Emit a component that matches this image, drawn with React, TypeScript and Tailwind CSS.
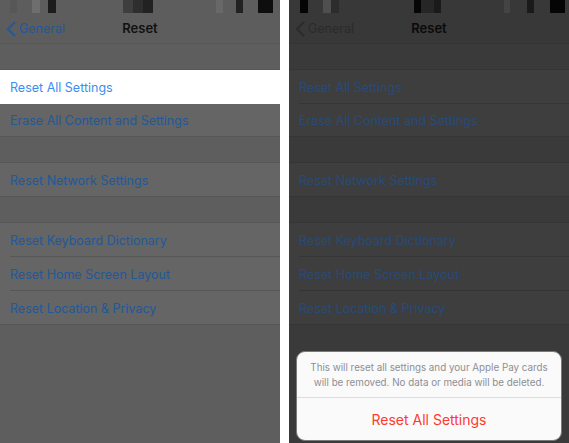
import React from "react";

type Theme = {
  head: string;
  gap: string;
  row: string;
  line: string;
  blue: string;
  title: string;
};

const leftTheme: Theme = {
  head: "bg-[#5d5d5d]",
  gap: "bg-[#5e5e5e]",
  row: "bg-[#656565]",
  line: "border-[#575757]",
  blue: "text-[#21599a]",
  title: "text-[#111111]",
};

const rightTheme: Theme = {
  head: "bg-[#383838]",
  gap: "bg-[#3a3a3a]",
  row: "bg-[#3e3e3e]",
  line: "border-[#353535]",
  blue: "text-[#264b7a]",
  title: "text-[#0a0a0a]",
};

function Chevron({ color }: { color: string }) {
  return (
    <svg width="10" height="16" viewBox="0 0 10 16" className="mr-[3px]">
      <path d="M8.5 1.5 L2 8 L8.5 14.5" fill="none" stroke={color} strokeWidth="2" strokeLinecap="round" strokeLinejoin="round" />
    </svg>
  );
}

function Row({
  label,
  t,
  h,
  full,
  highlight,
}: {
  label: string;
  t: Theme;
  h: string;
  full?: boolean;
  highlight?: boolean;
}) {
  return (
    <div className={`${h} ${full ? `border-b ${t.line}` : ""} ${highlight ? "bg-white" : t.row} pl-[10px]`}>
      <div
        className={`h-full flex items-center pt-[3px] ${full ? "" : `border-b ${highlight ? "border-[#ffffff]" : t.line}`} text-[12.5px] ${highlight ? "text-[#3a8ef0]" : t.blue}`}
      >
        {label}
      </div>
    </div>
  );
}

function Gap({ t }: { t: Theme }) {
  return <div className={`h-[26px] border-b ${t.line}`} />;
}

function Panel({ t, side }: { t: Theme; side: "left" | "right" }) {
  const isLeft = side === "left";
  return (
    <div className={`relative h-[443px] w-[280px] ${t.gap} flex flex-col overflow-hidden`}>
      {isLeft ? (
        <div className={`h-[13px] ${t.head} flex items-start`}>
          <div className="ml-[10px] w-[7px] h-[13px] bg-[#575757]" />
          <div className="ml-[15px] w-[8px] h-[13px] bg-[#6e6e6e]" />
          <div className="ml-[8px] w-[8px] h-[13px] bg-[#1c1c1c]" />
          <div className="ml-[67px] w-[10px] h-[13px] bg-[#3e3e3e]" />
          <div className="w-[10px] h-[13px] bg-[#2e2e2e]" />
          <div className="w-[10px] h-[13px] bg-[#222222]" />
          <div className="ml-[63px] w-[7px] h-[13px] bg-[#686868]" />
          <div className="ml-[13px] w-[7px] h-[13px] bg-[#222222]" />
          <div className="ml-[15px] w-[15px] h-[13px] bg-[#0e0e0e]" />
        </div>
      ) : (
        <div className={`h-[13px] ${t.head} flex items-start`}>
          <div className="ml-[11px] w-[8px] h-[13px] bg-[#050505]" />
          <div className="ml-[15px] w-[8px] h-[13px] bg-[#4f4f4f]" />
          <div className="w-[8px] h-[13px] bg-[#2c2c2c]" />
          <div className="ml-[75px] w-[7px] h-[13px] bg-[#060606]" />
          <div className="w-[13px] h-[13px] bg-[#262626]" />
          <div className="w-[7px] h-[13px] bg-[#1a1a1a]" />
          <div className="ml-[63px] w-[6px] h-[13px] bg-[#444444]" />
          <div className="ml-[17px] w-[7px] h-[13px] bg-[#1a1a1a]" />
          <div className="ml-[16px] w-[15px] h-[13px] bg-[#050505]" />
        </div>
      )}
      <div className={`relative h-[31px] ${t.head} border-b ${t.line} flex items-center pt-[2px]`}>
        <div className={`flex items-center pl-[6px] text-[12.5px] ${isLeft ? "text-[#21599a]" : "text-[#2b2b2b]"}`}>
          <Chevron color={isLeft ? "#21599a" : "#2b2b2b"} />
          General
        </div>
        <div className={`absolute left-0 right-0 text-center text-[13px] font-semibold ${t.title}`}>Reset</div>
      </div>
      <Gap t={t} />
      <Row label="Reset All Settings" t={t} h="h-[34px]" highlight={isLeft} />
      <Row label="Erase All Content and Settings" t={t} h="h-[33px]" full />
      <Gap t={t} />
      <Row label="Reset Network Settings" t={t} h="h-[34px]" full />
      <Gap t={t} />
      <Row label="Reset Keyboard Dictionary" t={t} h="h-[34px]" />
      <Row label="Reset Home Screen Layout" t={t} h="h-[34px]" />
      <Row label="Reset Location & Privacy" t={t} h="h-[34px]" full />
      <div className="flex-1" />
      {!isLeft && (
        <div className="absolute left-[7px] top-[351px] w-[266px] h-[90px] rounded-[9px] bg-[#fafafa] border border-[#7a7a7a] flex flex-col overflow-hidden">
          <div className="h-[46px] flex flex-col items-center justify-center text-[9.8px] leading-[15px] text-[#8e8e93] border-b border-[#dcdcdc]">
            <div>This will reset all settings and your Apple Pay cards</div>
            <div>will be removed. No data or media will be deleted.</div>
          </div>
          <div className="flex-1 flex items-center justify-center text-[14px] text-[#fd3b30]">Reset All Settings</div>
        </div>
      )}
    </div>
  );
}

export default function App() {
  return (
    <div
      className="w-[569px] h-[443px] bg-white flex gap-[9px] overflow-hidden"
      style={{ fontFamily: '"Inter", "Liberation Sans", sans-serif' }}
    >
      <Panel t={leftTheme} side="left" />
      <Panel t={rightTheme} side="right" />
    </div>
  );
}
